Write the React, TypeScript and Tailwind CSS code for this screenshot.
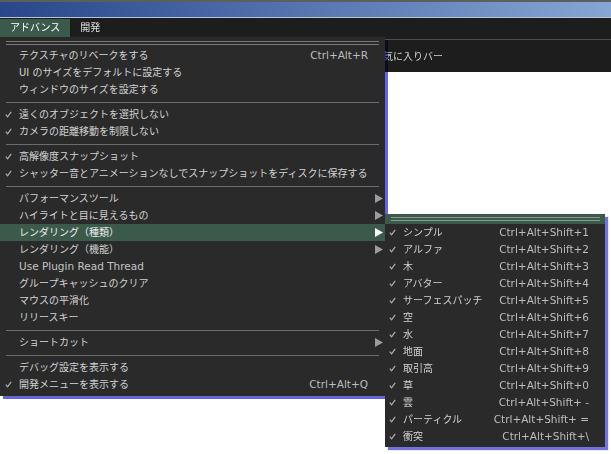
import React from 'react';

type Item = {
  label?: string;
  checked?: boolean;
  shortcut?: string;
  sub?: boolean;
  active?: boolean;
  latin?: boolean;
  sep?: boolean;
};

const mainItems: Item[] = [
  { label: 'テクスチャのリベークをする', shortcut: 'Ctrl+Alt+R' },
  { label: 'UI のサイズをデフォルトに設定する' },
  { label: 'ウィンドウのサイズを設定する' },
  { sep: true },
  { label: '遠くのオブジェクトを選択しない', checked: true },
  { label: 'カメラの距離移動を制限しない', checked: true },
  { sep: true },
  { label: '高解像度スナップショット', checked: true },
  { label: 'シャッター音とアニメーションなしでスナップショットをディスクに保存する', checked: true },
  { sep: true },
  { label: 'パフォーマンスツール', sub: true },
  { label: 'ハイライトと目に見えるもの', sub: true },
  { label: 'レンダリング（種類）', sub: true, active: true },
  { label: 'レンダリング（機能）', sub: true },
  { label: 'Use Plugin Read Thread', latin: true },
  { label: 'グループキャッシュのクリア' },
  { label: 'マウスの平滑化' },
  { label: 'リリースキー' },
  { sep: true },
  { label: 'ショートカット', sub: true },
  { sep: true },
  { label: 'デバッグ設定を表示する' },
  { label: '開発メニューを表示する', checked: true, shortcut: 'Ctrl+Alt+Q' },
];

const renderTypes = [
  ['シンプル', 'Ctrl+Alt+Shift+1'],
  ['アルファ', 'Ctrl+Alt+Shift+2'],
  ['木', 'Ctrl+Alt+Shift+3'],
  ['アバター', 'Ctrl+Alt+Shift+4'],
  ['サーフェスパッチ', 'Ctrl+Alt+Shift+5'],
  ['空', 'Ctrl+Alt+Shift+6'],
  ['水', 'Ctrl+Alt+Shift+7'],
  ['地面', 'Ctrl+Alt+Shift+8'],
  ['取引高', 'Ctrl+Alt+Shift+9'],
  ['草', 'Ctrl+Alt+Shift+0'],
  ['雲', 'Ctrl+Alt+Shift+ -'],
  ['パーティクル', 'Ctrl+Alt+Shift+ ='],
  ['衝突', 'Ctrl+Alt+Shift+\\'],
];

function Check() {
  return (
    <svg width="7" height="7" viewBox="0 0 7 7" className="block">
      <path d="M0.8 3.6 L2.6 5.8 L6.2 0.8" fill="none" stroke="#b0b0b0" strokeWidth="1.2" />
    </svg>
  );
}

function Arrow({ white }: { white?: boolean }) {
  return (
    <svg width="8" height="9" viewBox="0 0 8 9" className="block">
      <polygon points="0,0 8,4.5 0,9" fill={white ? '#ffffff' : '#9c9c9c'} />
    </svg>
  );
}

function DoubleLine() {
  return <div className="mx-[6px] h-[4px] border-y border-[#7a7a7a]" />;
}

export default function App() {
  return (
    <div
      className="relative w-[611px] h-[454px] overflow-hidden bg-white text-[10px] text-[#d2d2d2]"
      style={{ fontFamily: '"DejaVu Sans", "Noto Sans CJK JP", sans-serif' }}
    >
      {/* window title strip */}
      <div className="h-[2px] bg-[#5e5e5e]" />
      <div className="h-[15px] bg-gradient-to-r from-[#27478a] to-[#86a6d4]" />
      <div className="h-[1px] bg-[#b9c4d6]" />

      {/* menu bar */}
      <div className="h-[19px] bg-[#1d1d1d] flex items-end">
        <div className="h-[18px] px-[10px] bg-[#3b5a4b] text-white leading-[18px]">アドバンス</div>
        <div className="h-[18px] px-[10px] text-[#e0e0e0] leading-[18px]">開発</div>
      </div>

      {/* favorites bar */}
      <div className="h-[35px] bg-[#1d1d1d] pt-[2px]">
        <div className="h-[1px] bg-[#4e4e4e]" />
        <div className="ml-[373px] mt-[8px] leading-[17px]">お気に入りバー</div>
      </div>

      {/* drop shadow of the advanced menu, multiplied so it only tints the white area */}
      <div className="absolute left-[3px] top-[40px] w-[385px] h-[359px] bg-[#6565dc] mix-blend-multiply blur-[0.5px]" />

      {/* advanced menu */}
      <div className="absolute left-0 top-[37px] w-[385px] bg-[#2a2a2a] pt-[4px] pb-[3px]">
        <DoubleLine />
        <div className="mt-[2px]">
          {mainItems.map((it, i) =>
            it.sep ? (
              <div key={i} className="pt-[4px] pb-[3px]">
                <div className="mx-[6px] h-[1px] bg-[#6c6c6c]" />
              </div>
            ) : (
              <div
                key={i}
                className={`flex items-center h-[17px] leading-[17px] ${it.active ? 'bg-[#3b5a4b] text-[#eeeeee]' : ''}`}
              >
                <div className="w-[19px] pl-[5px] shrink-0">{it.checked && <Check />}</div>
                <div className={`flex-1 whitespace-nowrap ${it.latin ? 'text-[10.5px] text-[#c4c4c4]' : ''}`}>{it.label}</div>
                {it.shortcut && <div className="text-[10.5px] text-[#bdbdbd] whitespace-nowrap">{it.shortcut}</div>}
                <div className="w-[17px] shrink-0 flex justify-end pr-[2px]">{it.sub && <Arrow white={it.active} />}</div>
              </div>
            )
          )}
        </div>
      </div>

      {/* rendering types submenu */}
      <div className="absolute left-[385px] top-[214px] w-[220px] bg-[#2a2a2a] pb-[2px] shadow-[3px_3px_1px_rgba(90,90,215,0.85)]">
        <div className="bg-[#3b5a4b] pt-[3px] pb-[3px]">
          <div className="mx-[6px] mr-[5px] h-[4px] border-y border-[#8a9a90]" />
        </div>
        {renderTypes.map(([label, sc]) => (
          <div key={label} className="flex items-center h-[17px] leading-[17px]">
            <div className="w-[18px] pl-[4px] shrink-0">
              <Check />
            </div>
            <div className="flex-1 whitespace-nowrap">{label}</div>
            <div className="text-[10.5px] text-[#bdbdbd] whitespace-nowrap pr-[16px]">{sc}</div>
          </div>
        ))}
      </div>
    </div>
  );
}
